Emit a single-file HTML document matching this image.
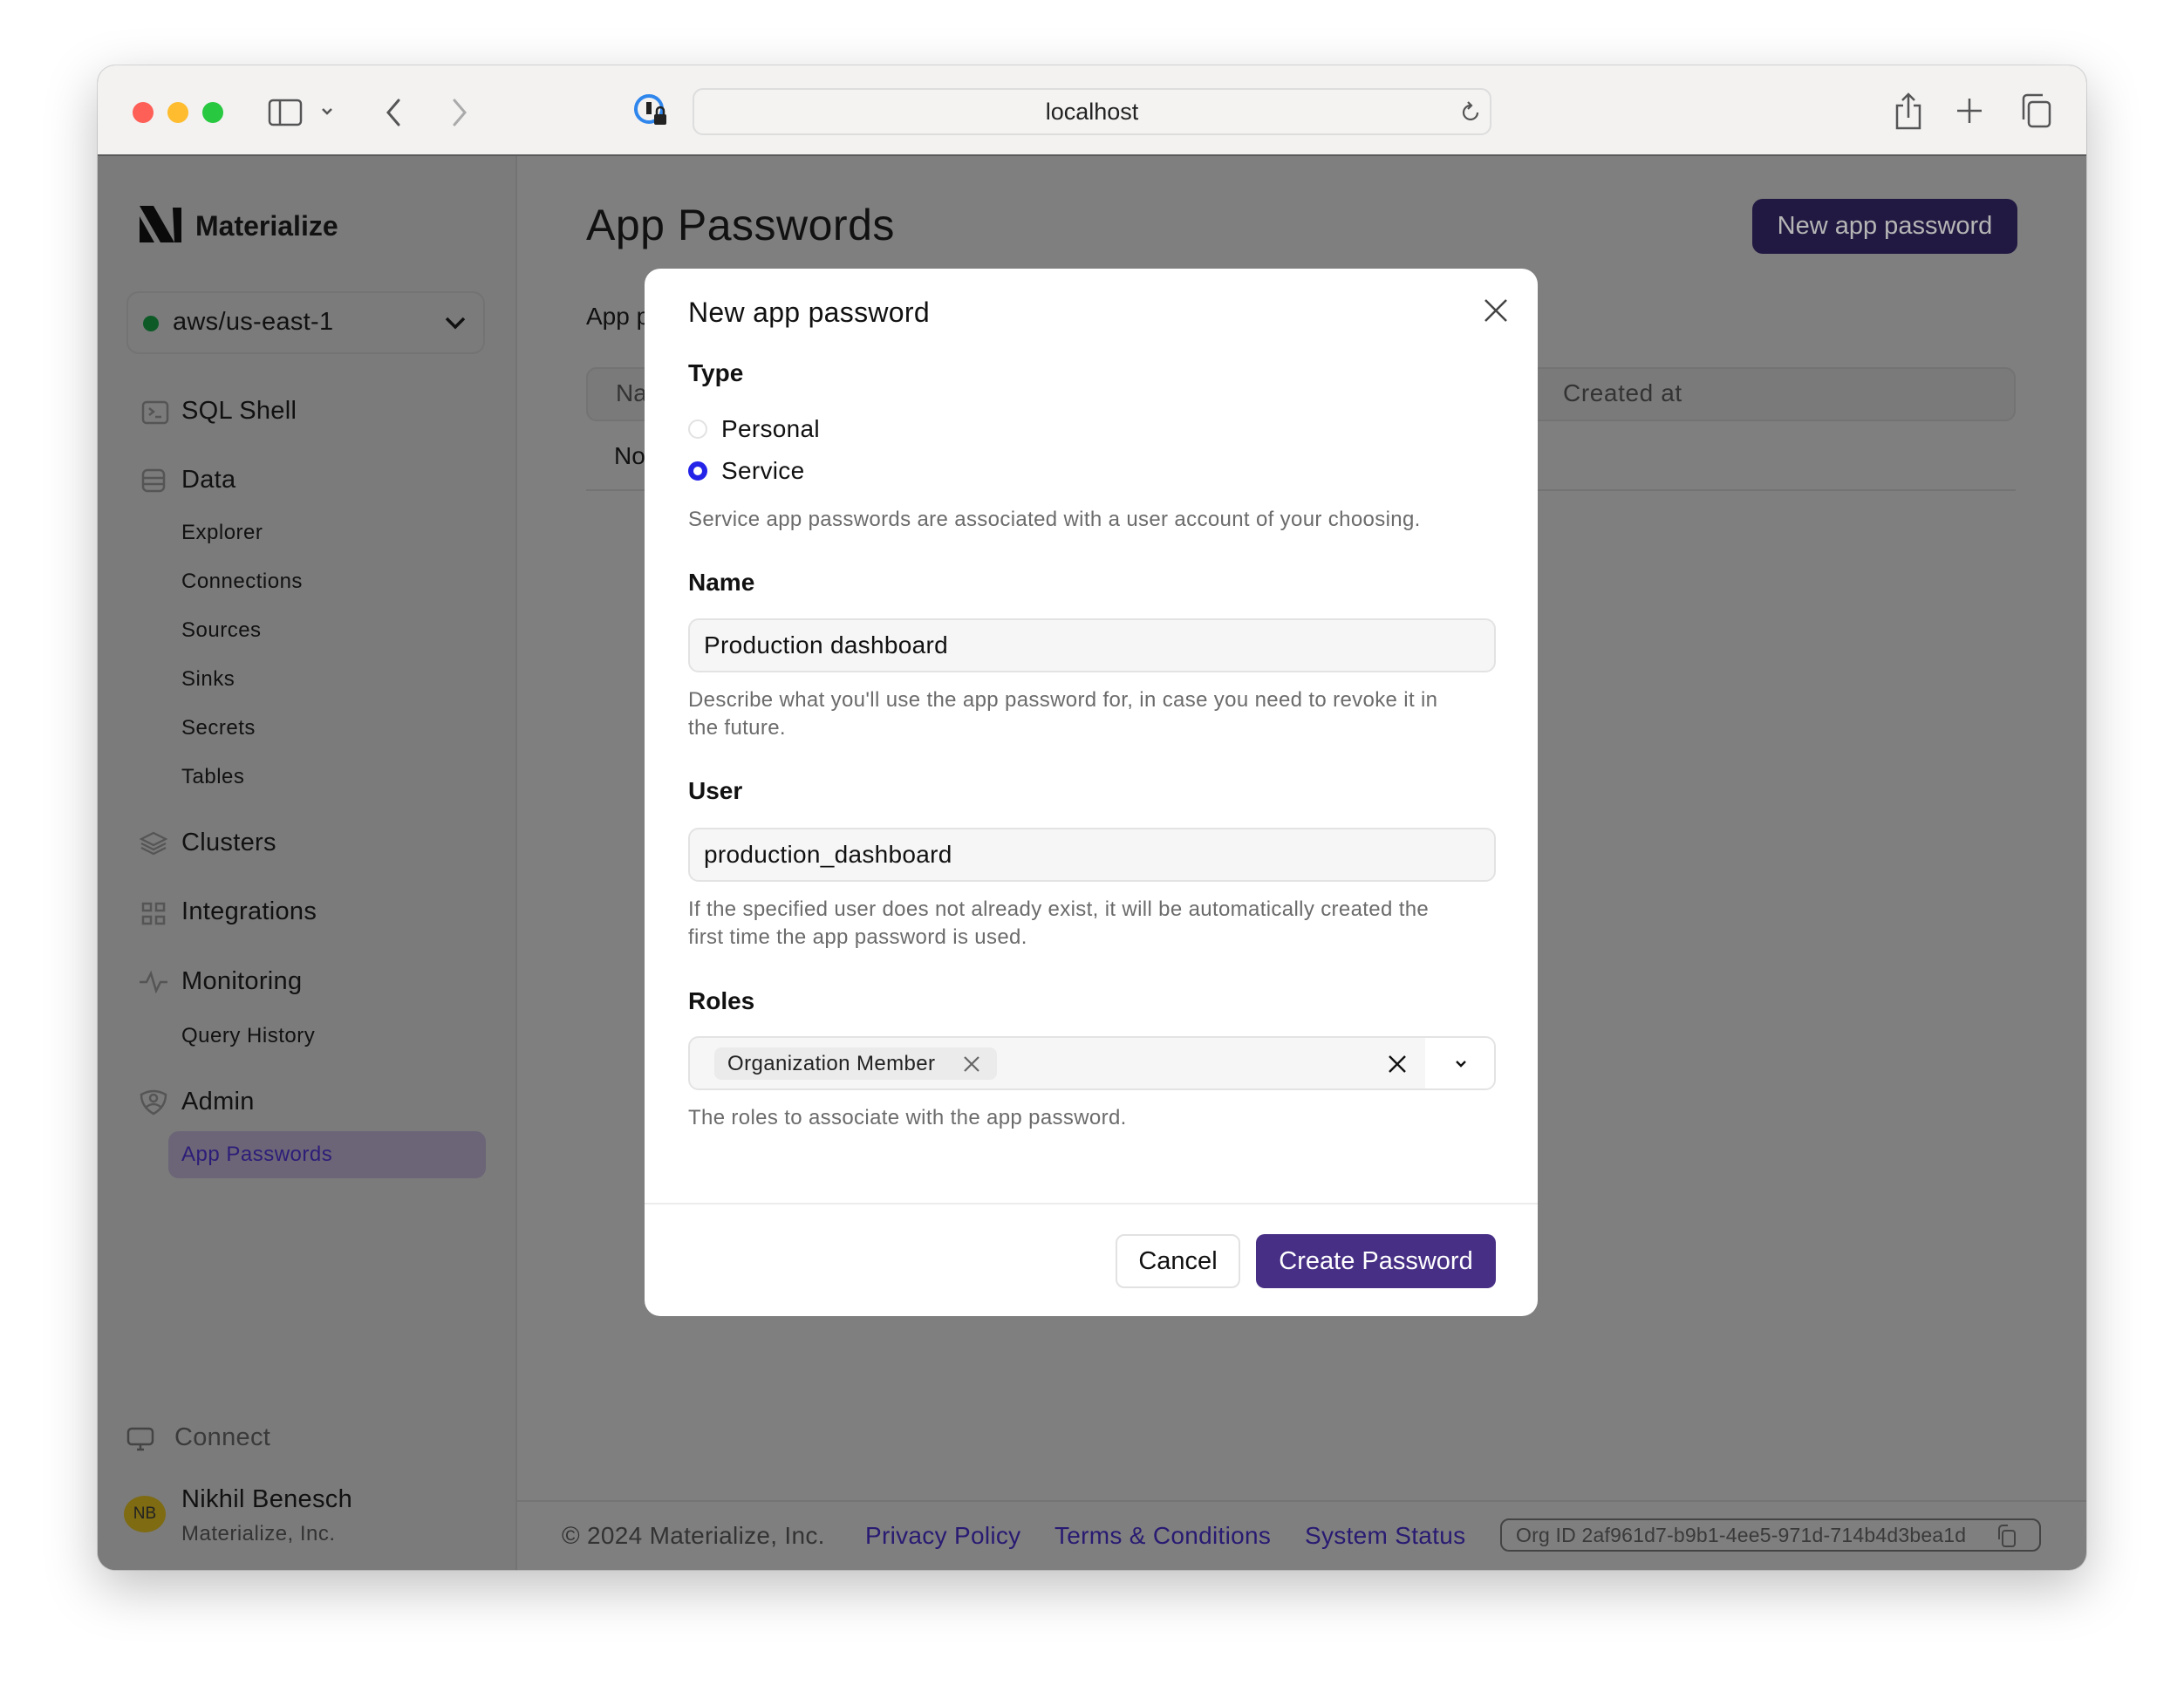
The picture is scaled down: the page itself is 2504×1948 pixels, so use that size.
<!DOCTYPE html>
<html><head><meta charset="utf-8"><style>
*{box-sizing:border-box;margin:0;padding:0}
body{width:2504px;height:1948px;background:#fff;font-family:"Liberation Sans",sans-serif;position:relative;overflow:hidden;color:#111}
.a{position:absolute;white-space:nowrap}
.win{position:absolute;left:112px;top:75px;width:2280px;height:1725px;border-radius:20px;overflow:hidden;box-shadow:0 20px 60px rgba(0,0,0,.25),0 0 0 1px rgba(0,0,0,.12);background:#7f7f7f}
.tb{position:absolute;left:0;top:0;width:2280px;height:104px;background:#f3f2f1;border-bottom:2px solid #5a5a5a}
.side{position:absolute;left:0;top:104px;width:481px;height:1621px;background:#7b7b7b;border-right:2px solid #737373}
.nav{font-size:29px;color:#111;letter-spacing:.3px}
.sub{font-size:24px;color:#111;letter-spacing:.5px}
.modal{position:absolute;left:739px;top:308px;width:1024px;height:1201px;background:#fff;border-radius:18px}
.m{position:absolute;white-space:nowrap}
.lbl{font-size:28px;font-weight:bold;color:#111}
.help{font-size:24px;color:#6b6b6b;line-height:32px;letter-spacing:.35px}
.inp{position:absolute;left:50px;width:926px;height:62px;background:#f6f6f6;border:2px solid #e3e3e3;border-radius:12px;font-size:28px;padding-left:16px;line-height:58px;letter-spacing:.3px}
</style></head><body>
<div class="win">
 <div class="tb">
  <div class="a" style="left:40px;top:42px;width:24px;height:24px;border-radius:50%;background:#fe5f57"></div>
  <div class="a" style="left:80px;top:42px;width:24px;height:24px;border-radius:50%;background:#febc2e"></div>
  <div class="a" style="left:120px;top:42px;width:24px;height:24px;border-radius:50%;background:#28c840"></div>
  <svg class="a" style="left:195px;top:38px" width="140" height="32" viewBox="0 0 140 32" fill="none" stroke="#555" stroke-width="2.5"><rect x="2" y="2" width="36" height="28" rx="4"/><line x1="14" y1="2" x2="14" y2="30"/><path d="M63 12l5 5 5-5"/></svg>
  <svg class="a" style="left:325px;top:36px" width="240" height="36" viewBox="0 0 240 36" fill="none" stroke-width="3" stroke-linecap="round"><path d="M20 4L8 18l12 14" stroke="#555"/><path d="M84 4l12 14-12 14" stroke="#aaa"/></svg>
  <svg class="a" style="left:614px;top:32px" width="40" height="40" viewBox="0 0 40 40"><circle cx="18" cy="18" r="15" fill="none" stroke="#2f86ec" stroke-width="4"/><rect x="15" y="10" width="6" height="14" fill="#222"/><rect x="24" y="24" width="14" height="12" rx="2" fill="#222"/><path d="M27 24v-4a4 4 0 018 0v4" stroke="#222" stroke-width="2.5" fill="none"/></svg>
  <div class="a" style="left:682px;top:26px;width:916px;height:54px;border:2px solid #ddd;border-radius:12px;background:#f4f3f2"></div>
  <div class="a" style="left:682px;top:26px;width:916px;height:54px;line-height:54px;text-align:center;font-size:27px;color:#222">localhost</div>
  <svg class="a" style="left:1560px;top:40px" width="28" height="28" viewBox="0 0 28 28" fill="none" stroke="#555" stroke-width="2.2"><path d="M22 14a8 8 0 11-8-8"/><path d="M11 2l4 4-4 4"/></svg>
  <svg class="a" style="left:2058px;top:30px" width="36" height="44" viewBox="0 0 36 44" fill="none" stroke="#555" stroke-width="2.5"><path d="M12 16H5v26h26V16h-7"/><path d="M18 30V3M11 10l7-7 7 7"/></svg>
  <svg class="a" style="left:2130px;top:36px" width="32" height="32" viewBox="0 0 32 32" stroke="#555" stroke-width="2.5"><path d="M16 2v28M2 16h28"/></svg>
  <svg class="a" style="left:2204px;top:32px" width="38" height="40" viewBox="0 0 38 40" fill="none" stroke="#555" stroke-width="2.5"><rect x="10" y="10" width="24" height="28" rx="4"/><path d="M4 30V6a4 4 0 014-4h18"/></svg>
 </div>
 <div class="side">
  <svg class="a" style="left:48px;top:57px" width="48" height="42" viewBox="0 0 48 42"><path d="M0 0h12l24 42H24z" fill="#0a0a0a"/><path d="M0 12l17 30H0z" fill="#0a0a0a"/><path d="M10 0h6l24 42h-6z" fill="#0a0a0a"/><path d="M38 2h10v40H40z" fill="#0a0a0a"/></svg>
  <div class="a" style="left:112px;top:62px;font-size:32px;font-weight:bold">Materialize</div>
  <div class="a" style="left:33px;top:155px;width:411px;height:72px;border:2px solid #737373;border-radius:14px"></div>
  <div class="a" style="left:52px;top:183px;width:18px;height:18px;border-radius:50%;background:#0d5a27"></div>
  <div class="a nav" style="left:86px;top:174px">aws/us-east-1</div>
  <svg class="a" style="left:398px;top:183px" width="24" height="16" viewBox="0 0 24 16" fill="none" stroke="#111" stroke-width="3.5"><path d="M2 3l10 10 10-10"/></svg>
  <svg class="a" style="left:50px;top:280px" width="32" height="28" viewBox="0 0 32 28" fill="none" stroke="#555" stroke-width="2.5"><rect x="2" y="2" width="28" height="24" rx="4"/><path d="M9 9l5 4-5 4M16 19h7"/></svg>
  <div class="a nav" style="left:96px;top:276px">SQL Shell</div>
  <svg class="a" style="left:50px;top:358px" width="28" height="28" viewBox="0 0 28 28" fill="none" stroke="#555" stroke-width="2.5"><rect x="2" y="2" width="24" height="24" rx="5"/><path d="M2 11h24M2 18h24"/></svg>
  <div class="a nav" style="left:96px;top:355px">Data</div>
  <div class="a sub" style="left:96px;top:418px">Explorer</div>
  <div class="a sub" style="left:96px;top:474px">Connections</div>
  <div class="a sub" style="left:96px;top:530px">Sources</div>
  <div class="a sub" style="left:96px;top:586px">Sinks</div>
  <div class="a sub" style="left:96px;top:642px">Secrets</div>
  <div class="a sub" style="left:96px;top:698px">Tables</div>
  <svg class="a" style="left:48px;top:774px" width="32" height="28" viewBox="0 0 32 28" fill="none" stroke="#555" stroke-width="2.2"><path d="M16 2l14 7-14 7-14-7z"/><path d="M2 14l14 7 14-7M2 19l14 7 14-7"/></svg>
  <div class="a nav" style="left:96px;top:771px">Clusters</div>
  <svg class="a" style="left:50px;top:855px" width="28" height="28" viewBox="0 0 28 28" fill="none" stroke="#555" stroke-width="2.5"><rect x="2" y="2" width="9" height="8"/><rect x="17" y="2" width="9" height="8"/><rect x="2" y="17" width="9" height="8"/><rect x="17" y="17" width="9" height="8"/></svg>
  <div class="a nav" style="left:96px;top:850px">Integrations</div>
  <svg class="a" style="left:48px;top:933px" width="32" height="28" viewBox="0 0 32 28" fill="none" stroke="#555" stroke-width="2.5"><path d="M0 14h8l5-10 6 20 5-10h8"/></svg>
  <div class="a nav" style="left:96px;top:930px">Monitoring</div>
  <div class="a sub" style="left:96px;top:995px">Query History</div>
  <svg class="a" style="left:48px;top:1070px" width="32" height="30" viewBox="0 0 32 30" fill="none" stroke="#555" stroke-width="2.5"><path d="M2 6q14-8 28 0q0 14-14 22Q2 20 2 6z"/><circle cx="16" cy="10" r="4"/><path d="M8 20q8-6 16 0"/></svg>
  <div class="a nav" style="left:96px;top:1068px">Admin</div>
  <div class="a" style="left:81px;top:1118px;width:364px;height:54px;border-radius:12px;background:#6b6577"></div>
  <div class="a sub" style="left:96px;top:1131px;color:#2e1d78">App Passwords</div>
  <svg class="a" style="left:33px;top:1457px" width="32" height="28" viewBox="0 0 32 28" fill="none" stroke="#444" stroke-width="2.5"><rect x="2" y="2" width="28" height="18" rx="4"/><path d="M12 26h8M16 20v6"/></svg>
  <div class="a nav" style="left:88px;top:1453px;color:#3a3a3a">Connect</div>
  <div class="a" style="left:30px;top:1536px;width:48px;height:42px;border-radius:50%;background:#7e6b12;font-size:19px;line-height:42px;text-align:center;color:#222">NB</div>
  <div class="a nav" style="left:96px;top:1524px">Nikhil Benesch</div>
  <div class="a sub" style="left:96px;top:1566px;color:#333">Materialize, Inc.</div>
 </div>
 <div class="a" style="left:560px;top:154px;font-size:50px;color:#111;letter-spacing:.5px">App Passwords</div>
 <div class="a" style="left:1897px;top:153px;width:304px;height:63px;background:#221942;border-radius:12px;color:#b5b5b5;font-size:29px;line-height:63px;text-align:center">New app password</div>
 <div class="a" style="left:560px;top:272px;font-size:28px">App p</div>
 <div class="a" style="left:560px;top:346px;width:1639px;height:62px;border:2px solid #737373;border-radius:12px;background:#7a7a7a"></div>
 <div class="a" style="left:594px;top:360px;font-size:28px;color:#333">Na</div>
 <div class="a" style="left:1680px;top:360px;font-size:28px;color:#333;letter-spacing:.6px">Created at</div>
 <div class="a" style="left:592px;top:432px;font-size:28px">No</div>
 <div class="a" style="left:560px;top:486px;width:1639px;height:2px;background:#737373"></div>
 <div class="a" style="left:481px;top:1645px;width:1799px;height:2px;background:#747474"></div>
 <div class="a" style="left:532px;top:1670px;font-size:28px;color:#333;letter-spacing:.3px">© 2024 Materialize, Inc.</div>
 <div class="a" style="left:880px;top:1670px;font-size:28px;color:#291a72;letter-spacing:.3px">Privacy Policy</div>
 <div class="a" style="left:1097px;top:1670px;font-size:28px;color:#291a72;letter-spacing:.3px">Terms &amp; Conditions</div>
 <div class="a" style="left:1384px;top:1670px;font-size:28px;color:#291a72;letter-spacing:.3px">System Status</div>
 <div class="a" style="left:1608px;top:1666px;width:620px;height:38px;border:2px solid #444;border-radius:10px;font-size:23px;color:#3a3a3a;line-height:34px;padding-left:16px;letter-spacing:.2px">Org ID 2af961d7-b9b1-4ee5-971d-714b4d3bea1d</div>
 <svg class="a" style="left:2174px;top:1672px" width="30" height="28" viewBox="0 0 30 28" fill="none" stroke="#444" stroke-width="2"><rect x="10" y="8" width="14" height="18" rx="3"/><path d="M6 18V6a4 4 0 014-4h6"/></svg>
</div>
<div class="modal">
 <div class="m" style="left:50px;top:32px;font-size:32px;letter-spacing:.3px">New app password</div>
 <svg class="m" style="left:962px;top:34px" width="28" height="28" viewBox="0 0 28 28" stroke="#444" stroke-width="2.5"><path d="M2 2l24 24M26 2L2 26"/></svg>
 <div class="m lbl" style="left:50px;top:104px">Type</div>
 <div class="m" style="left:50px;top:173px;width:22px;height:22px;border-radius:50%;border:2px solid #e2e2e2"></div>
 <div class="m" style="left:88px;top:168px;font-size:28px;letter-spacing:.3px">Personal</div>
 <div class="m" style="left:50px;top:221px;width:22px;height:22px;border-radius:50%;border:6px solid #2423e8;background:#fff"></div>
 <div class="m" style="left:88px;top:216px;font-size:28px;letter-spacing:.3px">Service</div>
 <div class="m help" style="left:50px;top:272px">Service app passwords are associated with a user account of your choosing.</div>
 <div class="m lbl" style="left:50px;top:344px">Name</div>
 <div class="inp" style="top:401px">Production dashboard</div>
 <div class="m help" style="left:50px;top:479px">Describe what you'll use the app password for, in case you need to revoke it in<br>the future.</div>
 <div class="m lbl" style="left:50px;top:583px">User</div>
 <div class="inp" style="top:641px">production_dashboard</div>
 <div class="m help" style="left:50px;top:719px">If the specified user does not already exist, it will be automatically created the<br>first time the app password is used.</div>
 <div class="m lbl" style="left:50px;top:824px">Roles</div>
 <div class="inp" style="top:880px;padding:0"></div>
 <div class="m" style="left:895px;top:882px;width:79px;height:58px;background:#fff;border-radius:0 10px 10px 0"></div>
 <div class="m" style="left:80px;top:893px;width:324px;height:37px;background:#ebebeb;border-radius:8px"></div>
 <div class="m" style="left:95px;top:896px;font-size:24px;color:#222;line-height:32px;letter-spacing:.4px">Organization Member</div>
 <svg class="m" style="left:366px;top:903px" width="18" height="18" viewBox="0 0 18 18" stroke="#666" stroke-width="2.2"><path d="M1 1l16 16M17 1L1 17"/></svg>
 <svg class="m" style="left:853px;top:902px" width="20" height="20" viewBox="0 0 20 20" stroke="#111" stroke-width="2.4"><path d="M1 1l18 18M19 1L1 19"/></svg>
 <svg class="m" style="left:929px;top:907px" width="14" height="10" viewBox="0 0 14 10" fill="none" stroke="#111" stroke-width="2.4"><path d="M2 2l5 5 5-5"/></svg>
 <div class="m help" style="left:50px;top:958px">The roles to associate with the app password.</div>
 <div class="m" style="left:0;top:1071px;width:1024px;height:2px;background:#ececec"></div>
 <div class="m" style="left:540px;top:1107px;width:143px;height:62px;border:2px solid #e2e2e2;border-radius:10px;font-size:29px;line-height:58px;text-align:center">Cancel</div>
 <div class="m" style="left:701px;top:1107px;width:275px;height:62px;background:#472f85;border-radius:10px;font-size:29px;line-height:62px;text-align:center;color:#fff">Create Password</div>
</div>
</body></html>
